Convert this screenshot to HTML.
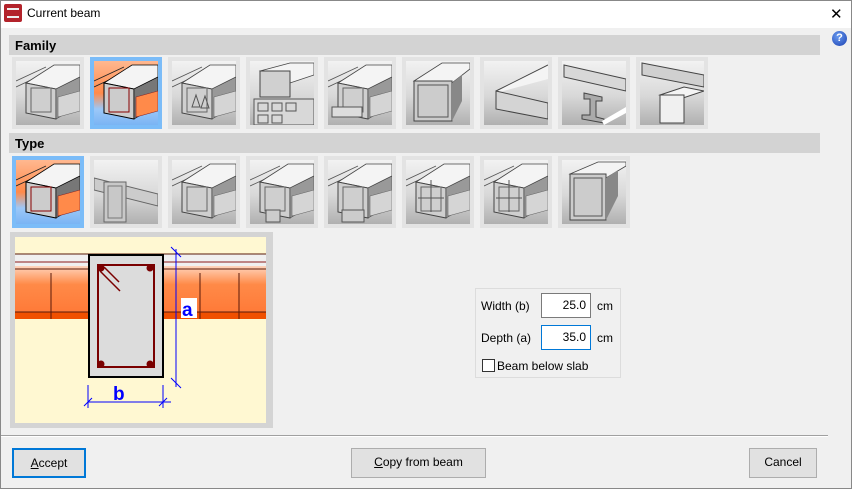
<!DOCTYPE html>
<html><head><meta charset="utf-8"><style>
*{margin:0;padding:0;box-sizing:border-box}
body{width:852px;height:489px;background:#f0f0f0;font-family:"Liberation Sans",sans-serif;position:relative;overflow:hidden;font-size:12px;color:#000}
.abs{position:absolute}
.title{left:0;top:0;width:852px;height:28px;background:#fff;border:1px solid #888;border-bottom:none}
.hdr{left:9px;width:811px;height:20px;background:#d3d3d3;font-weight:bold;font-size:13px;padding:3px 0 0 6px}
.tile{width:72px;height:72px;background:#e3e3e3;padding:4px}
.tile.sel{background:#7bbcf8}
.tile svg{display:block}
.btn{background:#e1e1e1;border:1px solid #adadad;text-align:center;font-size:12px;line-height:27px}
.inp{background:#fff;border:1px solid #7a7a7a;text-align:right;padding-right:4px;font-size:12px;line-height:22px}
</style></head><body>
<div class="abs title"></div>
<div class="abs" style="left:4px;top:4px;width:18px;height:18px;background:#b3232b;border-radius:2px"><div style="margin:4px 3px;width:12px;height:10px;border:2px solid #eee;border-left:none;border-right:none"></div></div>
<div class="abs" style="left:27px;top:6px;font-size:12px">Current beam</div>
<div class="abs" style="left:830px;top:5px;font-size:15px;font-family:'DejaVu Sans',sans-serif">✕</div>
<div class="abs" style="left:832px;top:31px;width:15px;height:15px;border-radius:50%;background:radial-gradient(circle at 40% 35%,#6a9cf0,#1a3fb0);color:#fff;font-weight:bold;font-size:11px;text-align:center;line-height:15px">?</div>

<div class="abs hdr" style="top:35px">Family</div>
<div class="abs hdr" style="top:133px">Type</div>

<svg width="0" height="0" style="position:absolute">
<defs>
<linearGradient id="g" x1="0" y1="0" x2="0" y2="1"><stop offset="0" stop-color="#f2f2f2"/><stop offset=".55" stop-color="#d8d8d8"/><stop offset="1" stop-color="#b0b0b0"/></linearGradient>
<linearGradient id="gs" x1="0" y1="0" x2="0" y2="1"><stop offset="0" stop-color="#ffb890"/><stop offset=".5" stop-color="#ff8a4a"/><stop offset=".75" stop-color="#9cc8f8"/><stop offset="1" stop-color="#7ab4f4"/></linearGradient>
<g id="beam"><path d="M0,20 L30,6 M0,26 L30,12" stroke="#555" fill="none" stroke-width=".8"/><path d="M10,22 L38,4 L64,4 L64,16 L40,28 Z" fill="#f4f4f4" stroke="#444" stroke-width=".8"/><path d="M10,22 L40,28 L40,58 L10,52 Z" fill="#cfcfcf" stroke="#444"/><path d="M40,28 L64,16 L64,44 L40,58 Z" fill="#999" stroke="#444" stroke-width=".6"/><path d="M42,36 L64,30 L64,50 L42,56Z" fill="#d5d5d5" stroke="#666" stroke-width=".6"/><rect x="15" y="27" width="20" height="24" fill="none" stroke="#666"/></g>
<g id="beams"><path d="M0,20 L30,6 M0,26 L30,12" stroke="#222" fill="none" stroke-width=".8"/><path d="M10,22 L38,4 L64,4 L64,16 L40,28 Z" fill="#f4f4f4" stroke="#000" stroke-width=".8"/><path d="M10,22 L40,28 L40,58 L10,52 Z" fill="#ccc" stroke="#000"/><path d="M40,28 L64,16 L64,44 L40,58 Z" fill="#777" stroke="#000" stroke-width=".6"/><path d="M42,36 L64,30 L64,50 L42,56Z" fill="#ff8a4a" stroke="#822" stroke-width=".6"/><rect x="15" y="27" width="20" height="24" fill="none" stroke="#800"/></g>
</defs></svg>

<!-- Family tiles -->
<div class="abs tile" style="left:12px;top:57px"><svg width="64" height="64"><rect width="64" height="64" fill="url(#g)"/><use href="#beam"/></svg></div>
<div class="abs tile sel" style="left:90px;top:57px"><svg width="64" height="64"><rect width="64" height="64" fill="url(#gs)"/><use href="#beams"/></svg></div>
<div class="abs tile" style="left:168px;top:57px"><svg width="64" height="64"><rect width="64" height="64" fill="url(#g)"/><use href="#beam"/><path d="M20,46 L24,34 L28,46Z M29,47 L33,35 L37,47Z" fill="none" stroke="#555"/></svg></div>
<div class="abs tile" style="left:246px;top:57px"><svg width="64" height="64"><rect width="64" height="64" fill="url(#g)"/><path d="M10,10 L40,2 L64,2 L64,14 L40,22Z" fill="#f4f4f4" stroke="#444" stroke-width=".8"/><rect x="10" y="10" width="30" height="26" fill="#d0d0d0" stroke="#444"/><rect x="4" y="38" width="60" height="26" fill="#d8d8d8" stroke="#555"/><path d="M8,42h10v8h-10z M22,42h10v8h-10z M36,42h10v8h-10z M8,54h10v8h-10z M22,54h10v8h-10z" fill="none" stroke="#555"/></svg></div>
<div class="abs tile" style="left:324px;top:57px"><svg width="64" height="64"><rect width="64" height="64" fill="url(#g)"/><use href="#beam"/><rect x="4" y="46" width="30" height="10" fill="#ddd" stroke="#555"/></svg></div>
<div class="abs tile" style="left:402px;top:57px"><svg width="64" height="64"><rect width="64" height="64" fill="url(#g)"/><path d="M8,20 L36,2 L64,2 L64,8 L46,22Z" fill="#f4f4f4" stroke="#444" stroke-width=".8"/><rect x="8" y="20" width="38" height="40" fill="#ccc" stroke="#444"/><rect x="12" y="24" width="30" height="32" fill="none" stroke="#555"/><path d="M46,22 L56,14 L56,40 L46,60Z" fill="#888"/></svg></div>
<div class="abs tile" style="left:480px;top:57px"><svg width="64" height="64"><rect width="64" height="64" fill="url(#g)"/><path d="M12,30 L64,4 L64,18 L12,32Z" fill="#f4f4f4"/><path d="M12,30 L64,4" stroke="#444" fill="none"/><path d="M12,30 L64,42 L64,58 L12,48Z" fill="#d4d4d4" stroke="#444"/></svg></div>
<div class="abs tile" style="left:558px;top:57px"><svg width="64" height="64"><rect width="64" height="64" fill="url(#g)"/><path d="M2,4 L64,18 L64,30 L2,16Z" fill="#d8d8d8" stroke="#444"/><path d="M22,32 L40,36 L40,40 L34,40 L34,56 L42,58 L42,62 L20,58 L20,54 L28,54 L28,38 L22,38Z" fill="#aaa" stroke="#444"/><path d="M40,60 L64,46 L64,52 L42,64Z" fill="#fff"/></svg></div>
<div class="abs tile" style="left:636px;top:57px"><svg width="64" height="64"><rect width="64" height="64" fill="url(#g)"/><path d="M2,2 L64,14 L64,26 L2,14Z" fill="#d0d0d0" stroke="#444"/><path d="M20,34 L44,26 L64,30 L40,38Z" fill="#f4f4f4" stroke="#444"/><rect x="20" y="34" width="24" height="28" fill="#f0f0f0" stroke="#444"/></svg></div>

<!-- Type tiles -->
<div class="abs tile sel" style="left:12px;top:156px"><svg width="64" height="64"><rect width="64" height="64" fill="url(#gs)"/><use href="#beams"/></svg></div>
<div class="abs tile" style="left:90px;top:156px"><svg width="64" height="64"><rect width="64" height="64" fill="url(#g)"/><path d="M0,18 L64,34 L64,46 L0,30Z" fill="#ccc" stroke="#666"/><rect x="10" y="22" width="22" height="40" fill="#c8c8c8" stroke="#666"/><rect x="14" y="26" width="14" height="32" fill="none" stroke="#777"/></svg></div>
<div class="abs tile" style="left:168px;top:156px"><svg width="64" height="64"><rect width="64" height="64" fill="url(#g)"/><use href="#beam"/></svg></div>
<div class="abs tile" style="left:246px;top:156px"><svg width="64" height="64"><rect width="64" height="64" fill="url(#g)"/><use href="#beam"/><rect x="16" y="50" width="14" height="12" fill="#ccc" stroke="#555"/></svg></div>
<div class="abs tile" style="left:324px;top:156px"><svg width="64" height="64"><rect width="64" height="64" fill="url(#g)"/><use href="#beam"/><rect x="14" y="50" width="22" height="12" fill="#ccc" stroke="#555"/></svg></div>
<div class="abs tile" style="left:402px;top:156px"><svg width="64" height="64"><rect width="64" height="64" fill="url(#g)"/><use href="#beam"/><path d="M25,20 V52 M12,38 H38" stroke="#555"/></svg></div>
<div class="abs tile" style="left:480px;top:156px"><svg width="64" height="64"><rect width="64" height="64" fill="url(#g)"/><use href="#beam"/><path d="M25,20 V52 M12,38 H38" stroke="#555"/></svg></div>
<div class="abs tile" style="left:558px;top:156px"><svg width="64" height="64"><rect width="64" height="64" fill="url(#g)"/><path d="M8,14 L36,2 L64,2 L64,6 L44,18Z" fill="#f4f4f4" stroke="#444" stroke-width=".8"/><rect x="8" y="14" width="36" height="46" fill="#ccc" stroke="#444"/><rect x="12" y="18" width="28" height="38" fill="none" stroke="#555"/><path d="M44,18 L56,10 L56,36 L44,60Z" fill="#888"/></svg></div>

<!-- drawing -->
<div class="abs" style="left:10px;top:232px;width:263px;height:196px;background:#d4d4d4"></div>
<svg class="abs" style="left:15px;top:237px" width="251" height="186">
<rect width="251" height="186" fill="#fff8d2"/>
<defs><linearGradient id="sl" x1="0" y1="0" x2="0" y2="1"><stop offset="0" stop-color="#ffd4bc"/><stop offset=".4" stop-color="#ff8a48"/><stop offset="1" stop-color="#ff7a38"/></linearGradient></defs>
<rect x="0" y="17" width="251" height="20" fill="#f0f0f0"/>
<rect x="0" y="29" width="251" height="46" fill="url(#sl)"/>
<rect x="0" y="75" width="251" height="7" fill="#f05000"/>
<path d="M0,17H251 M0,32H251 M0,75H251" stroke="#5a1a0a" fill="none"/>
<path d="M0,25H251" stroke="#8b1a1a"/>
<path d="M36,36V82 M185,36V82 M224,36V82" stroke="#5a1a0a"/>
<rect x="74" y="18" width="74" height="122" fill="#dcdcdc" stroke="#000" stroke-width="2"/>
<rect x="83" y="28" width="56" height="102" fill="none" stroke="#7a0000" stroke-width="2"/>
<circle cx="86" cy="31" r="3.5" fill="#7a0000"/><circle cx="135" cy="31" r="3.5" fill="#7a0000"/><circle cx="86" cy="127" r="3.5" fill="#7a0000"/><circle cx="135" cy="127" r="3.5" fill="#7a0000"/>
<path d="M85,34 L105,54 M89,30 L104,45" stroke="#7a0000" stroke-width="1.5"/>
<path d="M161,12V150 M156,10L166,20 M156,141L166,151" stroke="#0000ff"/>
<rect x="166" y="61" width="16" height="20" fill="#fff"/>
<text x="167" y="79" fill="#0000ff" font-weight="bold" font-size="19" font-family="Liberation Sans">a</text>
<path d="M73,165H156 M73,148V171 M148,148V171 M69,169L77,161 M144,169L152,161" stroke="#0000ff"/>
<text x="98" y="163" fill="#0000ff" font-weight="bold" font-size="19" font-family="Liberation Sans">b</text>
</svg>

<!-- form -->
<div class="abs" style="left:475px;top:288px;width:146px;height:90px;border:1px solid #dcdcdc"></div>
<div class="abs" style="left:481px;top:299px">Width (b)</div>
<div class="abs inp" style="left:541px;top:293px;width:50px;height:25px">25.0</div>
<div class="abs" style="left:597px;top:299px">cm</div>
<div class="abs" style="left:481px;top:331px">Depth (a)</div>
<div class="abs inp" style="left:541px;top:325px;width:50px;height:25px;border-color:#0078d7">35.0</div>
<div class="abs" style="left:597px;top:331px">cm</div>
<div class="abs" style="left:482px;top:359px;width:13px;height:13px;background:#fff;border:1px solid #333"></div>
<div class="abs" style="left:497px;top:359px">Beam below slab</div>

<!-- footer -->
<div class="abs" style="left:0;top:435px;width:828px;height:1px;background:#a0a0a0"></div>
<div class="abs" style="left:0;top:436px;width:828px;height:1px;background:#fff"></div>
<div class="abs btn" style="left:12px;top:448px;width:74px;height:30px;border:2px solid #0078d7;line-height:26px"><u>A</u>ccept</div>
<div class="abs btn" style="left:351px;top:448px;width:135px;height:30px"><u>C</u>opy from beam</div>
<div class="abs btn" style="left:749px;top:448px;width:68px;height:30px">Cancel</div>
<div class="abs" style="left:0;top:488px;width:852px;height:1px;background:#888"></div>
<div class="abs" style="left:0;top:28px;width:1px;height:461px;background:#888"></div>
<div class="abs" style="left:851px;top:28px;width:1px;height:461px;background:#888"></div>
</body></html>
